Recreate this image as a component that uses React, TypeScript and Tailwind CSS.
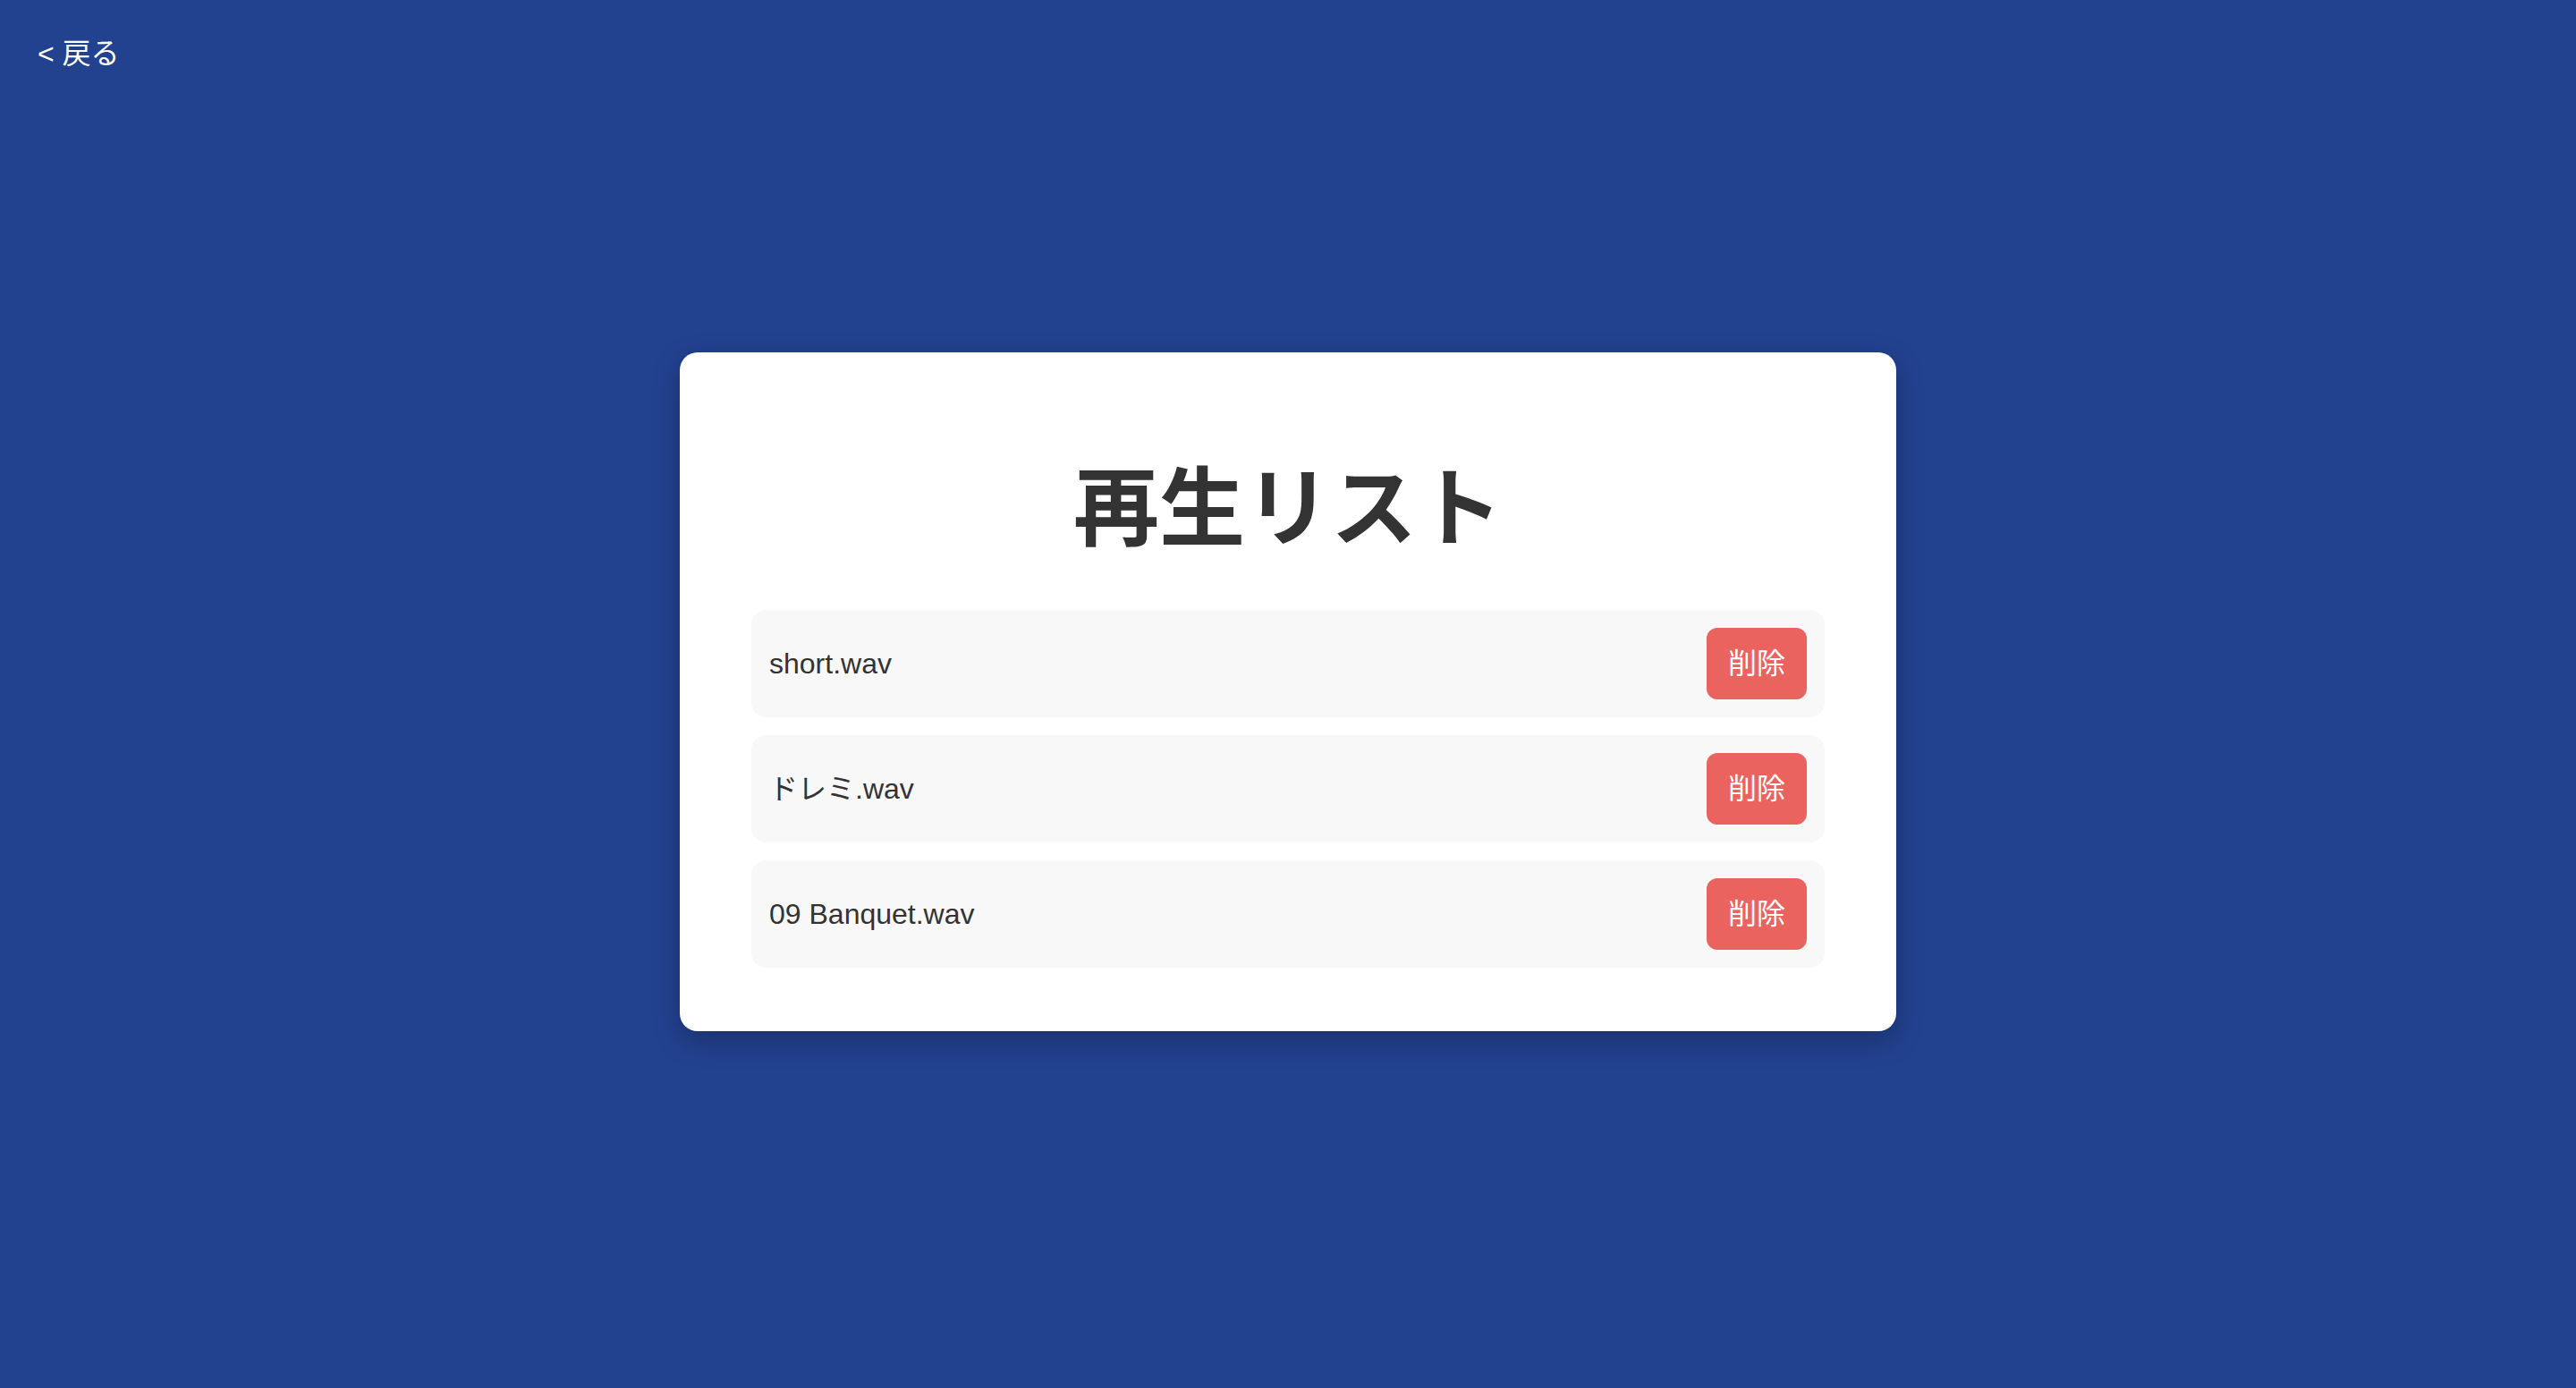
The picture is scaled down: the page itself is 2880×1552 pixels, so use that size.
const tracks = ['short.wav', 'ドレミ.wav', '09 Banquet.wav'];

export default function App() {
  return (
    <div
      className="relative min-h-screen bg-[#22418f] flex items-center justify-center pb-[5px] text-[#333333]"
      style={{ fontFamily: '"Liberation Sans", "Noto Sans CJK JP", sans-serif' }}
    >
      <button className="absolute top-[40px] left-[42px] text-white text-[32px] leading-[40px]">
        &lt; 戻る
      </button>

      <div className="w-[1360px] bg-white rounded-[20px] px-[80px] pt-[127px] pb-[71px] shadow-[0_10px_30px_rgba(0,0,0,0.25)]">
        <h1 className="text-center text-[96px] leading-none font-bold mb-[65px]">再生リスト</h1>

        <ul className="flex flex-col gap-[20px]">
          {tracks.map((name) => (
            <li
              key={name}
              className="flex items-center justify-between bg-[#f8f8f8] rounded-[16px] p-[20px] h-[120px]"
            >
              <span className="text-[32px] leading-[40px]">{name}</span>
              <button className="bg-[#eb635f] text-white text-[32px] leading-[40px] px-[24px] py-[20px] rounded-[12px] w-[112px] h-[80px] flex items-center justify-center">
                削除
              </button>
            </li>
          ))}
        </ul>
      </div>
    </div>
  );
}
